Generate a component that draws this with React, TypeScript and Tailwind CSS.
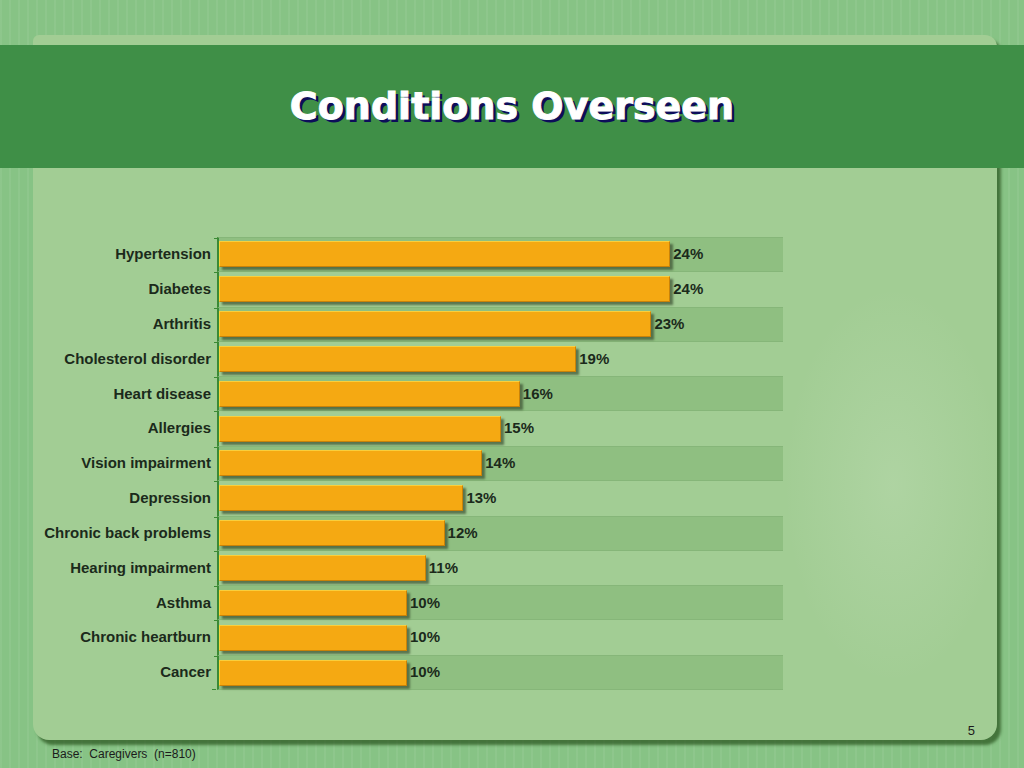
const ROWS = [
  { label: "Hypertension", pct: 24 },
  { label: "Diabetes", pct: 24 },
  { label: "Arthritis", pct: 23 },
  { label: "Cholesterol disorder", pct: 19 },
  { label: "Heart disease", pct: 16 },
  { label: "Allergies", pct: 15 },
  { label: "Vision impairment", pct: 14 },
  { label: "Depression", pct: 13 },
  { label: "Chronic back problems", pct: 12 },
  { label: "Hearing impairment", pct: 11 },
  { label: "Asthma", pct: 10 },
  { label: "Chronic heartburn", pct: 10 },
  { label: "Cancer", pct: 10 },
];

const PX_PER_PCT = 18.8;

export default function App() {
  return (
    <div className="relative h-[768px] w-[1024px] overflow-hidden bg-[#87c385] bg-[repeating-linear-gradient(90deg,rgba(255,255,255,0.06)_0px,rgba(255,255,255,0.06)_2px,transparent_2px,transparent_9px)] pl-[33px] pr-[27px] pt-[35px] font-['Liberation_Sans',Arial,sans-serif]">
      {/* panel */}
      <div className="relative h-[705px] rounded-bl-[16px] rounded-br-[16px] rounded-tl-[6px] rounded-tr-[12px] bg-[#a2cd94] shadow-[4px_5px_3px_rgba(45,90,35,0.75)]">
        <div className="h-[10px]" />
        {/* title band */}
        <div className="-ml-[33px] -mr-[27px] flex h-[123px] items-center justify-center bg-[#3f8f47]">
          <h1 className="font-['DejaVu_Sans',Verdana,sans-serif] text-[38px] font-bold text-white [-webkit-text-stroke:1px_white] [text-shadow:3px_3px_0_#0d0d5a]">
            Conditions Overseen
          </h1>
        </div>

        {/* faint hand ghost */}
        <div className="pointer-events-none absolute left-[750px] top-[250px] h-[400px] w-[220px] rounded-full bg-[radial-gradient(ellipse_at_center,rgba(230,242,225,0.18),rgba(230,242,225,0)_70%)]" />

        {/* chart */}
        <div className="relative mt-[69px] flex flex-col">
          {ROWS.map((r, i) => (
            <div key={r.label} className="flex h-[34.85px] items-center">
              <div className="w-[184px] pr-[6px] text-right text-[15px] font-bold text-[#1b2a1b]">
                {r.label}
              </div>
              <div
                className={`relative flex h-full w-[566px] items-center border-l-2 border-[#3b8a35] ${
                  i % 2 === 0 ? "border-y border-y-[#86b679] bg-[#8fbf81]" : ""
                }`}
              >
                <span className="absolute -left-[5px] top-0 h-px w-[4px] bg-[#3b8a35]" />
                <div
                  className="h-[26px] border border-b-[#c98208] border-l-[#f7d43a] border-r-[#c98208] border-t-[#f9cf3c] bg-[#f5a912] shadow-[3px_3px_2px_rgba(60,80,50,0.7)]"
                  style={{ width: r.pct * PX_PER_PCT }}
                />
                <span className="ml-[3px] text-[15px] font-bold text-[#1b2a1b]">{r.pct}%</span>
              </div>
            </div>
          ))}
          <span className="absolute bottom-0 left-[179px] h-px w-[4px] bg-[#3b8a35]" />
        </div>

        <div className="absolute bottom-0 right-[22px] text-[13px] text-[#1b1b1b]">5</div>
      </div>

      <div className="pl-[19px] pt-[5px] text-[12px] text-[#1b1b1b]">Base:&nbsp; Caregivers&nbsp; (n=810)</div>
    </div>
  );
}
